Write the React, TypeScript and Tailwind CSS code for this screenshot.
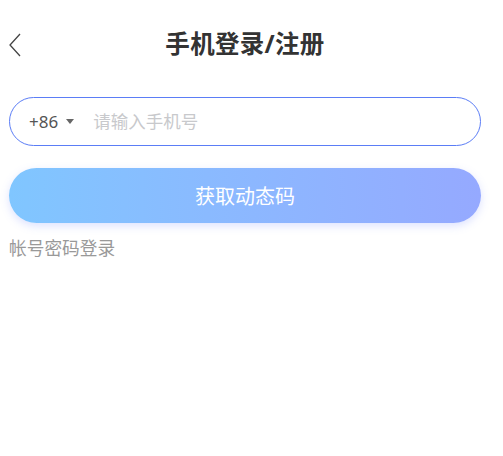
export default function App() {
  return (
    <div className="min-h-screen w-full bg-white" style={{ fontFamily: '"Noto Sans", "Noto Sans CJK SC", sans-serif' }}>
      {/* Header */}
      <div className="relative h-[90px] pr-[13px] flex items-center justify-center">
        <button className="absolute left-[8px] top-[33px]">
          <svg width="14" height="24" viewBox="0 0 14 24" fill="none" stroke="#444" strokeWidth="1.3">
            <polyline points="12,1 2,12 12,23" />
          </svg>
        </button>
        <h1 className="text-[24.5px] font-bold text-[#333] -mt-[2px] tracking-[0.3px]">手机登录/注册</h1>
      </div>

      <div className="pl-[9px] pr-[22px] pt-[7px]">
        {/* Phone input */}
        <div className="h-[49px] rounded-full border-[1.5px] border-[#5b7df6] flex items-center pl-[19px] pr-4">
          <span className="text-[17px] text-[#555] leading-none">+86</span>
          <span className="ml-[8px] w-0 h-0 border-l-[4px] border-r-[4px] border-t-[5px] border-l-transparent border-r-transparent border-t-[#666]" />
          <input
            className="ml-[19px] flex-1 bg-transparent outline-none text-[17.5px] text-[#333] placeholder:text-[#c8c9cc]"
            placeholder="请输入手机号"
          />
        </div>

        {/* Submit */}
        <button className="mt-[22px] w-full h-[55px] pt-[3px] rounded-full bg-gradient-to-r from-[#80c6ff] to-[#95a9ff] text-white text-[20px] shadow-[0_3px_8px_rgba(120,140,255,0.25)]">
          获取动态码
        </button>

        <div className="mt-[12px] text-[17.7px] text-[#999]">帐号密码登录</div>
      </div>
    </div>
  )
}
